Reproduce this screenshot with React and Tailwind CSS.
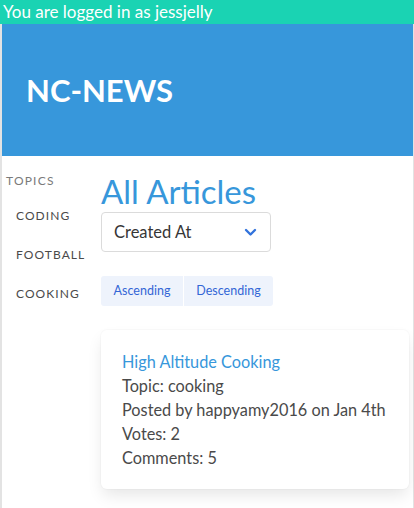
import React from "react";

export default function App() {
  return (
    <div className="min-h-[508px] bg-white" style={{ fontFamily: 'Lato, "Noto Sans", sans-serif' }}>
      <div className="bg-[#1ad3b3] text-white h-6 pl-[3px] text-[17px] leading-6 whitespace-nowrap">
        You are logged in as jessjelly
      </div>
      <div className="border-l-2 border-r border-[#e3e3e3] min-h-[484px]">
        <header className="bg-[#3797db] h-[132px] flex items-center pl-[24px]">
          <h1 className="text-white font-bold text-[31px] leading-none">NC-NEWS</h1>
        </header>
        <div className="flex">
          <aside className="w-[99px] shrink-0 pt-[17px]">
            <p className="pl-1 text-[12px] leading-[16px] tracking-[0.1em] text-[#7a7a7a] uppercase">Topics</p>
            <ul className="mt-[16px] flex flex-col gap-[17px]">
              <li className="pl-[14px] text-[12px] leading-[22px] tracking-[0.09em] text-[#4a4a4a]">CODING</li>
              <li className="pl-[14px] text-[12px] leading-[22px] tracking-[0.09em] text-[#4a4a4a]">FOOTBALL</li>
              <li className="pl-[14px] text-[12px] leading-[22px] tracking-[0.09em] text-[#4a4a4a]">COOKING</li>
            </ul>
          </aside>
          <main className="flex-1 pr-1 pt-[17px] pb-[18px]">
            <h2 className="text-[#3797db] text-[33px] leading-[36px]">All Articles</h2>
            <div className="mt-[3px] w-[170px] h-[40px] border border-[#dbdbdb] rounded-[4px] flex items-center justify-between pl-3 pr-[13px] text-[16.5px] text-[#363636]">
              <span>Created At</span>
              <svg width="13" height="9" viewBox="0 0 13 9" fill="none">
                <path d="M2 2 L6.5 6.5 L11 2" stroke="#3273dc" strokeWidth="2.4" strokeLinecap="round" strokeLinejoin="round" />
              </svg>
            </div>
            <div className="mt-[24px] flex w-[172px] h-[30px] text-[12.5px] text-[#3366d6]">
              <div className="w-[82px] bg-[#eef3fc] rounded-l-[3px] flex items-center justify-center">Ascending</div>
              <div className="flex-1 bg-[#eef3fc] rounded-r-[3px] flex items-center justify-center ml-px">Descending</div>
            </div>
            <div className="mt-[24px] rounded-[6px] bg-white pl-[21px] pr-4 pt-5 pb-[19px] shadow-[0_8px_16px_-2px_rgba(10,10,10,0.1),0_0_0_1px_rgba(10,10,10,0.02)] text-[16.3px] leading-[24px] text-[#4a4a4a] whitespace-nowrap">
              <p className="text-[#3797db]">High Altitude Cooking</p>
              <p>Topic: cooking</p>
              <p>Posted by happyamy2016 on Jan 4th</p>
              <p>Votes: 2</p>
              <p>Comments: 5</p>
            </div>
          </main>
        </div>
      </div>
    </div>
  );
}
